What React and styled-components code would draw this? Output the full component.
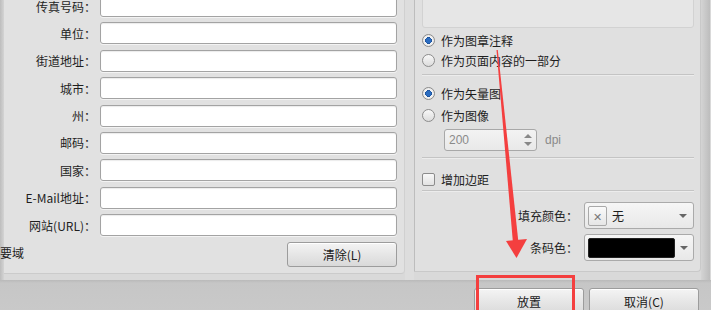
import React from 'react';
import styled, { createGlobalStyle } from 'styled-components';

const Global = createGlobalStyle`
  html, body { margin: 0; padding: 0; background: #dcdcdc; }
  body { font-family: "Noto Sans CJK SC", "Noto Sans", "Liberation Sans", sans-serif; }
`;

const Screen = styled.div`
  position: relative;
  width: 711px;
  height: 310px;
  overflow: hidden;
  background: #dedede;
  font-size: 12px;
  color: #1e1e1e;
`;

const Main = styled.div`
  display: flex;
  height: 280px;
  background: #d9d9d9;
`;

const Edge = styled.div`
  width: ${p => p.w}px;
  flex: none;
  background: linear-gradient(${p => (p.right ? '90deg' : '270deg')}, #d4d4d4, #bdbdbd);
`;

const LeftPanel = styled.div`
  width: 400px;
  height: 273px;
  flex: none;
  background: #e1e1e1;
  border-right: 1px solid #d0d0d0;
  border-bottom: 1px solid #cbcbcb;
  border-bottom-right-radius: 4px;
  display: flex;
  flex-direction: column;
`;

const Form = styled.div`
  display: grid;
  grid-template-columns: 92px 297px;
  column-gap: 4px;
  row-gap: 5.4px;
  margin-top: -5px;
`;

const Label = styled.div`
  height: 22px;
  display: flex;
  align-items: center;
  justify-content: flex-end;
  white-space: nowrap;
`;

const Field = styled.div`
  height: 20px;
  background: #fff;
  border: 1px solid #a3a3a3;
  border-radius: 3px;
  box-shadow: inset 0 1px 1px rgba(0, 0, 0, 0.08), 0 1px 0 rgba(255, 255, 255, 0.6);
`;

const FootRow = styled.div`
  display: flex;
  align-items: center;
  justify-content: space-between;
  margin-top: 6px;
  padding-right: 7px;
  height: 25px;
`;

const Clipped = styled.span`
  margin-left: -4px;
  margin-top: -4px;
`;

const Button = styled.div`
  width: ${p => p.w}px;
  height: ${p => p.h}px;
  box-sizing: border-box;
  border: 1px solid #9c9c9c;
  border-radius: 3px;
  background: linear-gradient(#f4f4f4, #e6e6e6 50%, #d9d9d9);
  box-shadow: inset 0 1px 0 #fff;
  display: flex;
  align-items: ${p => (p.low ? 'flex-start' : 'center')};
  padding-top: ${p => (p.low ? '4px' : '0')};
  justify-content: center;
  font-size: 12px;
  color: #1a1a1a;
`;

const Gap = styled.div`
  width: 9px;
  flex: none;
  background: #dddddd;
`;

const RightPanel = styled.div`
  width: 287px;
  height: 272px;
  flex: none;
  box-sizing: border-box;
  border-left: 1px solid #bdbdbd;
  border-right: 1px solid #c9c9c9;
  border-bottom: 1px solid #c9c9c9;
  border-bottom-right-radius: 4px;
  background: #e0e0e0;
  padding: 0 6px 0 7px;
  display: flex;
  flex-direction: column;
`;

const TopBox = styled.div`
  margin-top: -10px;
  height: 36px;
  flex: none;
  background: #e6e6e6;
  border: 1px solid #d2d2d2;
  border-radius: 3px;
`;

const Row = styled.div`
  display: flex;
  align-items: center;
  gap: 6px;
  height: 20px;
  flex: none;
  margin-top: ${p => p.mt || 0}px;
`;

const Radio = styled.span`
  width: 13px;
  height: 13px;
  box-sizing: border-box;
  border-radius: 50%;
  border: 1px solid #8c8c8c;
  background: ${p =>
    p.on
      ? 'radial-gradient(circle, #2b6cc0 0 2.6px, #1b4f96 3.2px, #f4f4f4 3.6px, #dcdcdc)'
      : 'linear-gradient(#f8f8f8, #dcdcdc)'};
  flex: none;
`;

const Check = styled.span`
  width: 13px;
  height: 13px;
  box-sizing: border-box;
  border-radius: 2px;
  border: 1px solid #8c8c8c;
  background: linear-gradient(#f8f8f8, #e2e2e2);
  flex: none;
`;

const Separator = styled.div`
  height: 1px;
  flex: none;
  background: #c4c4c4;
  box-shadow: 0 1px 0 #ececec;
  margin-top: ${p => p.mt || 0}px;
`;

const SpinRow = styled.div`
  display: flex;
  align-items: center;
  gap: 8px;
  margin: 4px 0 0 22px;
  height: 22px;
  flex: none;
`;

const Spin = styled.div`
  width: 93px;
  height: 22px;
  box-sizing: border-box;
  border: 1px solid #a8a8a8;
  border-radius: 3px;
  background: linear-gradient(#f3f3f3, #e9e9e9);
  display: flex;
  align-items: center;
  justify-content: space-between;
  padding: 0 4px;
  color: #8a8a8a;
  font-family: "Liberation Sans", "Noto Sans", sans-serif;
  font-size: 12px;
`;

const Unit = styled.span`
  color: #8a8a8a;
  font-family: "Liberation Sans", "Noto Sans", sans-serif;
  font-size: 12px;
`;

const ComboRow = styled.div`
  display: flex;
  align-items: center;
  justify-content: flex-end;
  gap: 6px;
  height: 27px;
  flex: none;
  margin-top: ${p => p.mt || 0}px;
`;

const Combo = styled.div`
  width: 110px;
  height: 27px;
  box-sizing: border-box;
  border: 1px solid #aaaaaa;
  border-radius: 3px;
  background: linear-gradient(#f6f6f6, #e8e8e8);
  display: flex;
  align-items: center;
  padding: 0 6px 0 3px;
  gap: 5px;
`;

const Swatch = styled.div`
  width: ${p => p.w}px;
  height: 20px;
  box-sizing: border-box;
  border-radius: 2px;
  border: 1px solid ${p => (p.dark ? '#222' : '#a9a9a9')};
  background: ${p => (p.dark ? '#000' : 'linear-gradient(#fafafa, #e6e6e6)')};
  display: flex;
  align-items: center;
  justify-content: center;
  color: #777;
  font-size: 11px;
  flex: none;
`;

const Arrow = styled.span`
  margin-left: auto;
  width: 0;
  height: 0;
  border-left: 4px solid transparent;
  border-right: 4px solid transparent;
  border-top: 4px solid #666;
`;

const BottomBar = styled.div`
  height: 30px;
  box-sizing: border-box;
  background: linear-gradient(#b9b9b9, #c6c6c6 3px, #c9c9c9);
  display: flex;
  justify-content: flex-end;
  gap: 5px;
  padding: 8px 12px 0 0;
`;

const Overlay = styled.svg`
  position: absolute;
  left: 0;
  top: 0;
  pointer-events: none;
`;

const fields = ['传真号码', '单位', '街道地址', '城市', '州', '邮码', '国家', 'E-Mail地址', '网站(URL)'];

const SpinArrows = () => (
  <svg width="8" height="14" viewBox="0 0 8 14">
    <path d="M0 5 L4 1 L8 5 Z" fill="#888" />
    <path d="M0 9 L4 13 L8 9 Z" fill="#888" />
  </svg>
);

export default function App() {
  return (
    <Screen>
      <Global />
      <Main>
        <Edge w={4} />
        <LeftPanel>
          <Form>
            {fields.map(f => (
              <React.Fragment key={f}>
                <Label>{f}：</Label>
                <Field />
              </React.Fragment>
            ))}
          </Form>
          <FootRow>
            <Clipped>要域</Clipped>
            <Button w={110} h={25}>清除(L)</Button>
          </FootRow>
        </LeftPanel>
        <Gap />
        <RightPanel>
          <TopBox />
          <Row mt={2}><Radio on />作为图章注释</Row>
          <Row><Radio />作为页面内容的一部分</Row>
          <Separator mt={4} />
          <Row mt={8}><Radio on />作为矢量图</Row>
          <Row mt={2}><Radio />作为图像</Row>
          <SpinRow>
            <Spin>200<SpinArrows /></Spin>
            <Unit>dpi</Unit>
          </SpinRow>
          <Separator mt={6} />
          <Row mt={11}><Check />增加边距</Row>
          <Separator mt={1} />
          <ComboRow mt={11}>
            填充颜色：
            <Combo>
              <Swatch w={19}>✕</Swatch>
              无
              <Arrow />
            </Combo>
          </ComboRow>
          <ComboRow mt={5}>
            条码色：
            <Combo>
              <Swatch w={87} dark />
              <Arrow />
            </Combo>
          </ComboRow>
        </RightPanel>
        <Edge w={9} right />
      </Main>
      <BottomBar>
        <Button w={110} h={28} low>放置</Button>
        <Button w={110} h={28} low>取消(C)</Button>
      </BottomBar>
      <Overlay width="711" height="310" viewBox="0 0 711 310">
        <polygon points="496.5,50 497.8,50 518.5,243 513,243.5" fill="#f43f3f" />
        <polygon points="506,241 527,239 516.5,258" fill="#f43f3f" />
        <rect x="477.5" y="276.5" width="96" height="40" fill="none" stroke="#f43f3f" strokeWidth="3" />
      </Overlay>
    </Screen>
  );
}
